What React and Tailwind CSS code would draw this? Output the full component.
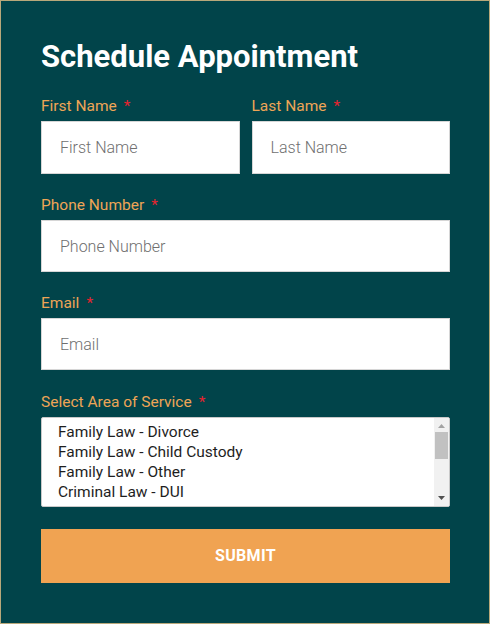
export default function App() {
  const options = [
    'Family Law - Divorce',
    'Family Law - Child Custody',
    'Family Law - Other',
    'Criminal Law - DUI',
    'Criminal Law - Felony',
  ];

  return (
    <div
      className="w-[490px] h-[624px] border border-[#b9a87a] bg-[#01444a] pl-10 pr-[39px] pt-[39px]"
      style={{ fontFamily: 'Roboto, "Liberation Sans", sans-serif' }}
    >
      <h1 className="text-[31px] leading-[34px] font-bold text-white">Schedule Appointment</h1>

      {/* Name row */}
      <div className="mt-[22px] flex gap-3">
        <div className="flex-1">
          <Label text="First Name" />
          <Input placeholder="First Name" />
        </div>
        <div className="flex-1">
          <Label text="Last Name" />
          <Input placeholder="Last Name" />
        </div>
      </div>

      <div className="mt-[21px]">
        <Label text="Phone Number" />
        <Input placeholder="Phone Number" h="h-[52px]" />
      </div>

      <div className="mt-[21px]">
        <Label text="Email" />
        <Input placeholder="Email" h="h-[52px]" />
      </div>

      <div className="mt-[22px]">
        <Label text="Select Area of Service" />
        <div className="mt-[5px] h-[90px] bg-white border border-[#c9c9c9] rounded-[2px] flex overflow-hidden">
          <div className="flex-1 pl-4 pt-[4px] text-[15.5px] leading-[20px] text-[#1e1e1e]">
            {options.map((o) => (
              <div key={o} className="whitespace-nowrap">{o}</div>
            ))}
          </div>
          {/* scrollbar */}
          <div className="w-[15px] bg-[#f1f1f1] flex flex-col items-center">
            <svg width="9" height="12" viewBox="0 0 9 12" className="mt-[2px]">
              <path d="M1 8 L4.5 4 L8 8 Z" fill="#a3a3a3" />
            </svg>
            <div className="w-[13px] h-[27px] bg-[#c1c1c1]" />
            <div className="flex-1" />
            <svg width="9" height="12" viewBox="0 0 9 12" className="mb-[2px]">
              <path d="M1 4 L8 4 L4.5 8 Z" fill="#505050" />
            </svg>
          </div>
        </div>
      </div>

      <button className="mt-[22px] w-full h-[54px] bg-[#f0a352] text-white text-[16px] font-bold tracking-[0.3px]">
        SUBMIT
      </button>
    </div>
  );
}

function Label({ text }) {
  return (
    <div className="text-[15.5px] leading-[20px] text-[#eea556]">
      {text}
      <span className="ml-[7px] text-[#e8232e]">*</span>
    </div>
  );
}

function Input({ placeholder, h = 'h-[53px]' }) {
  return (
    <input
      placeholder={placeholder}
      className={`mt-[5px] block w-full ${h} bg-white border border-[#d6d6d6] px-[18px] text-[16px] font-light text-[#333] placeholder:text-[#6f6f6f] outline-none`}
    />
  );
}
